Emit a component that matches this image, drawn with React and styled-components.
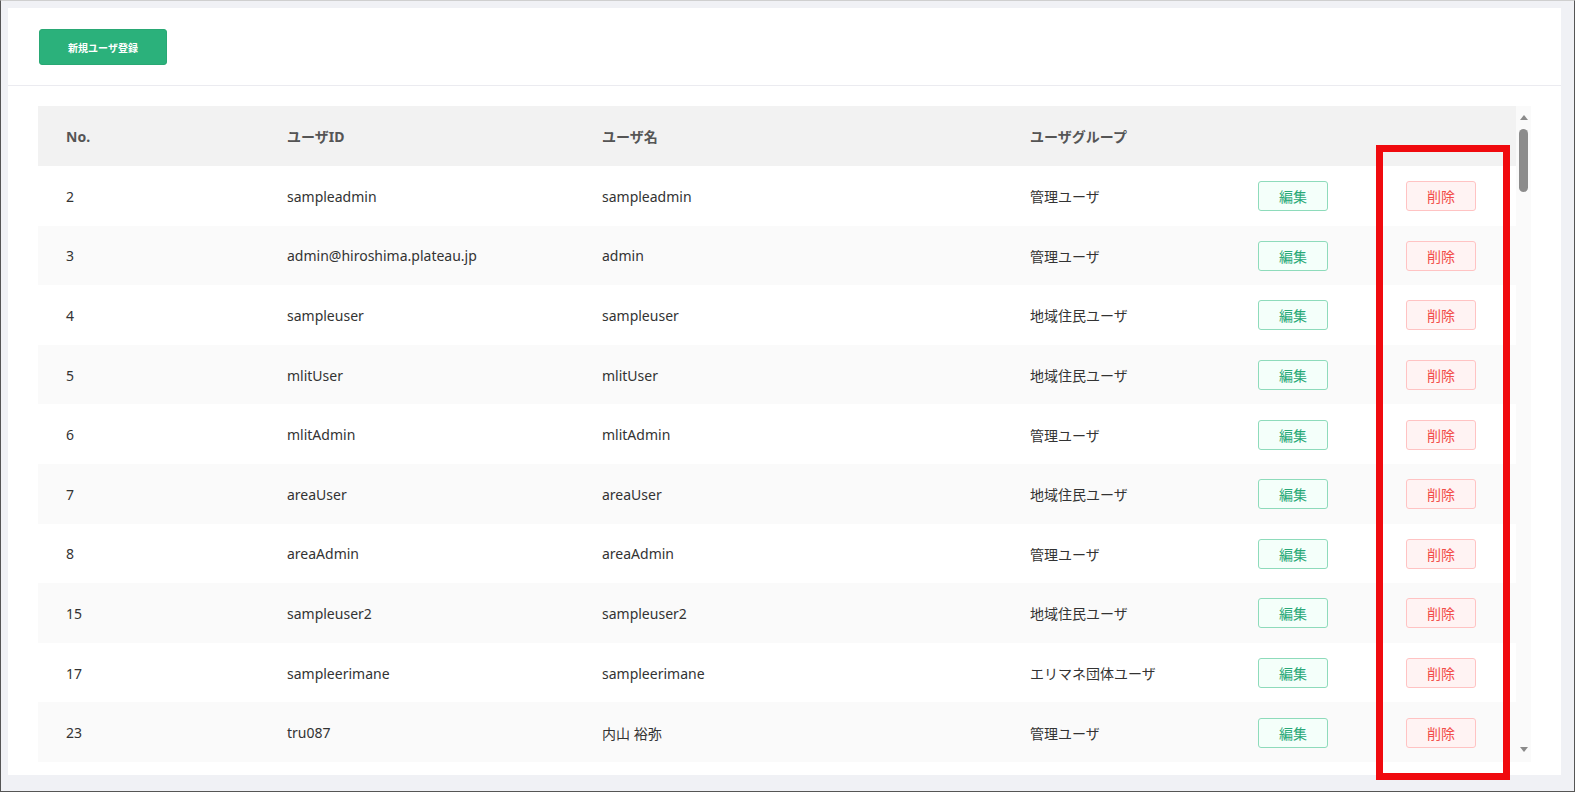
import React from "react";
import styled, { createGlobalStyle } from "styled-components";

const GlobalStyle = createGlobalStyle`
  html, body { margin: 0; padding: 0; }
  body {
    font-family: "Noto Sans", "Noto Sans CJK JP", sans-serif;
    color: #333;
  }
`;

const Frame = styled.div`
  position: relative;
  width: 1575px;
  height: 792px;
  box-sizing: border-box;
  border: 1px solid #555;
  border-top-color: #cfcfcf;
  background: #f0f1f5;
  padding: 7px 13px 16px 7px;
`;

const Card = styled.div`
  width: 100%;
  height: 100%;
  background: #fff;
  display: flex;
  flex-direction: column;
`;

const Toolbar = styled.div`
  height: 78px;
  box-sizing: border-box;
  padding: 21px 0 0 31px;
  border-bottom: 1px solid #ebebf0;
`;

const PrimaryButton = styled.button`
  width: 128px;
  height: 36px;
  border: 1px solid #29a874;
  border-radius: 3px;
  background: #2bb17b;
  color: #fff;
  font-family: "Noto Sans CJK JP", sans-serif;
  font-size: 10px;
  font-weight: 700;
  cursor: pointer;
`;

const TableArea = styled.div`
  margin: 20px 0 0 30px;
  width: 1493px;
  height: 656px;
  display: flex;
  overflow: hidden;
`;

const Table = styled.div`
  width: 1478px;
  flex: none;
`;

const ScrollBar = styled.div`
  width: 15px;
  flex: none;
  background: #fafafa;
  display: flex;
  flex-direction: column;
  align-items: center;
  padding: 9px 0 10px;
  box-sizing: border-box;
`;

const Arrow = styled.div`
  width: 0;
  height: 0;
  border-left: 4px solid transparent;
  border-right: 4px solid transparent;
  ${(p) =>
    p.$down
      ? "border-top: 5px solid #8a8a8a; margin-top: auto;"
      : "border-bottom: 5px solid #8a8a8a;"}
`;

const Thumb = styled.div`
  margin-top: 9px;
  width: 9px;
  height: 63px;
  border-radius: 5px;
  background: #8c8c8c;
`;

const Row = styled.div`
  display: grid;
  grid-template-columns: 221px 315px 428px 228px 148px 138px;
  align-items: center;
  height: ${(p) => (p.$head ? "60px" : "59.6px")};
  background: ${(p) => (p.$head ? "#f2f2f2" : p.$alt ? "#fafafa" : "#fff")};
`;

const HeadCell = styled.div`
  padding-left: 28px;
  font-size: 14px;
  font-weight: 700;
  color: #555;
  white-space: nowrap;
`;

const Cell = styled.div`
  padding-left: 28px;
  padding-top: 1px;
  font-size: 14px;
  color: #333;
  white-space: nowrap;
`;

const ActionButton = styled.button`
  width: 70px;
  height: 30px;
  border-radius: 3px;
  font-family: "Noto Sans CJK JP", sans-serif;
  font-size: 14px;
  cursor: pointer;
  border: 1px solid ${(p) => (p.$danger ? "#ffc3c3" : "#8edbbb")};
  background: ${(p) => (p.$danger ? "#fff3f3" : "#f4fffa")};
  color: ${(p) => (p.$danger ? "#f24d4a" : "#28a877")};
`;

const Highlight = styled.div`
  position: absolute;
  left: 1375px;
  top: 144px;
  width: 134px;
  height: 635px;
  box-sizing: border-box;
  border: 7px solid #f00a0e;
  pointer-events: none;
`;

const users = [
  [2, "sampleadmin", "sampleadmin", "管理ユーザ"],
  [3, "admin@hiroshima.plateau.jp", "admin", "管理ユーザ"],
  [4, "sampleuser", "sampleuser", "地域住民ユーザ"],
  [5, "mlitUser", "mlitUser", "地域住民ユーザ"],
  [6, "mlitAdmin", "mlitAdmin", "管理ユーザ"],
  [7, "areaUser", "areaUser", "地域住民ユーザ"],
  [8, "areaAdmin", "areaAdmin", "管理ユーザ"],
  [15, "sampleuser2", "sampleuser2", "地域住民ユーザ"],
  [17, "sampleerimane", "sampleerimane", "エリマネ団体ユーザ"],
  [23, "tru087", "内山 裕弥", "管理ユーザ"],
];

export default function App() {
  return (
    <>
      <GlobalStyle />
      <Frame>
        <Card>
          <Toolbar>
            <PrimaryButton>新規ユーザ登録</PrimaryButton>
          </Toolbar>
          <TableArea>
            <Table>
              <Row $head>
                <HeadCell>No.</HeadCell>
                <HeadCell>ユーザID</HeadCell>
                <HeadCell>ユーザ名</HeadCell>
                <HeadCell>ユーザグループ</HeadCell>
                <HeadCell />
                <HeadCell />
              </Row>
              {users.map((u, i) => (
                <Row key={u[0]} $alt={i % 2 === 1}>
                  <Cell>{u[0]}</Cell>
                  <Cell>{u[1]}</Cell>
                  <Cell>{u[2]}</Cell>
                  <Cell>{u[3]}</Cell>
                  <Cell>
                    <ActionButton>編集</ActionButton>
                  </Cell>
                  <Cell>
                    <ActionButton $danger>削除</ActionButton>
                  </Cell>
                </Row>
              ))}
            </Table>
            <ScrollBar>
              <Arrow />
              <Thumb />
              <Arrow $down />
            </ScrollBar>
          </TableArea>
        </Card>
        <Highlight />
      </Frame>
    </>
  );
}
